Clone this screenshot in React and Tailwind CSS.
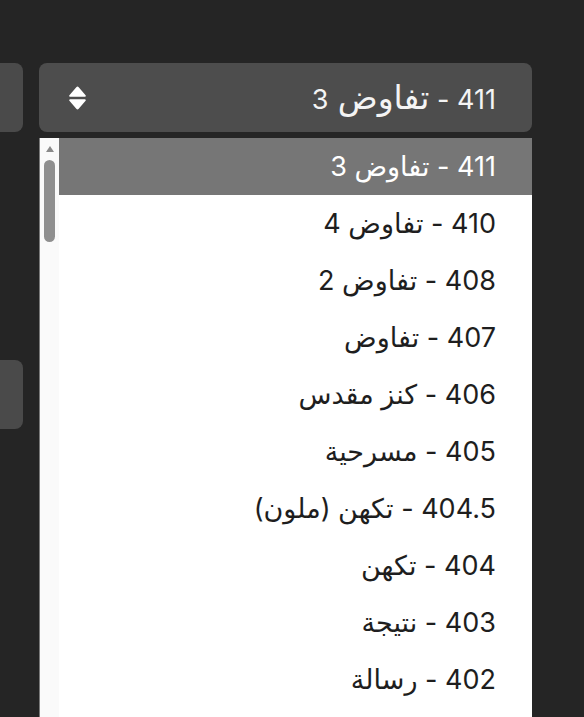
import { useState } from 'react';

const options = [
    { id: '411', label: 'تفاوض 3' },
    { id: '410', label: 'تفاوض 4' },
    { id: '408', label: 'تفاوض 2' },
    { id: '407', label: 'تفاوض' },
    { id: '406', label: 'كنز مقدس' },
    { id: '405', label: 'مسرحية' },
    { id: '404.5', label: 'تكهن (ملون)' },
    { id: '404', label: 'تكهن' },
    { id: '403', label: 'نتيجة' },
    { id: '402', label: 'رسالة' },
];

function SortIcon() {
    return (
        <svg width="19" height="24" viewBox="0 0 19 24" fill="#ffffff">
            <path d="M8.3 1.2 a1.5 1.5 0 0 1 2.4 0 L17.6 9.2 a1 1 0 0 1 -0.8 1.6 H2.2 a1 1 0 0 1 -0.8 -1.6 Z" />
            <path d="M8.3 22.8 a1.5 1.5 0 0 0 2.4 0 L17.6 14.8 a1 1 0 0 0 -0.8 -1.6 H2.2 a1 1 0 0 0 -0.8 1.6 Z" />
        </svg>
    );
}

// the closed select draws its arabic words a little bigger than the list does
function BigArabic({ text }) {
    return text.split(/(\d+)/).map((part, i) =>
        /\d/.test(part) ? <span key={i}>{part}</span> : <span key={i} className="text-[33px]">{part}</span>
    );
}

export default function App() {
    const [selected, setSelected] = useState('411');
    const current = options.find(o => o.id === selected);

    return (
        <div
            className="bg-[#252525] h-[717px] overflow-hidden flex gap-4 pt-[63px]"
            style={{ fontFamily: '"Inter", "DejaVu Sans", sans-serif' }}
        >
            {/* partially visible neighbours on the left */}
            <div className="w-[23px] flex flex-col gap-[228px]">
                <div className="h-[69px] bg-[#4a4a4a] rounded-r-lg"></div>
                <div className="h-[69px] bg-[#4a4a4a] rounded-r-lg"></div>
            </div>

            <div className="w-[493px] flex flex-col">
                {/* select box */}
                <div dir="rtl" className="h-[69px] bg-[#4d4d4d] rounded-lg flex items-center justify-between pr-[36px] pl-[29px]">
                    <span className="text-[27px] text-[#f4f4f4] leading-none">
                        {current.id} - <BigArabic text={current.label} />
                    </span>
                    <SortIcon />
                </div>

                {/* open option list */}
                <div className="mt-[6px] flex-1 flex bg-white border-l border-[#7a7a7a]">
                    <div className="w-[19px] bg-[#fafafa] flex flex-col items-center pt-[8px]">
                        <div className="w-0 h-0 border-l-[4px] border-r-[4px] border-b-[6px] border-l-transparent border-r-transparent border-b-[#8a8a8a]"></div>
                        <div className="mt-[8px] w-[11px] h-[82px] rounded-full bg-[#8f8f8f]"></div>
                    </div>
                    <ul className="flex-1">
                        {options.map(o => (
                            <li
                                key={o.id}
                                dir="rtl"
                                onClick={() => setSelected(o.id)}
                                className={`h-[57px] flex items-center pr-[36px] text-[27px] leading-none ${o.id === selected ? 'bg-[#767676] text-white' : 'text-[#1e1e1e]'}`}
                            >
                                {o.id} - {o.label}
                            </li>
                        ))}
                    </ul>
                </div>
            </div>
        </div>
    );
}
